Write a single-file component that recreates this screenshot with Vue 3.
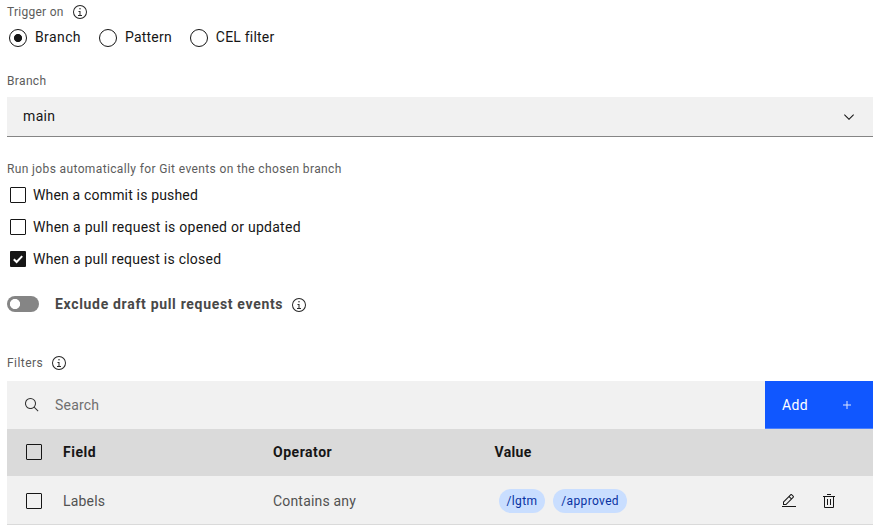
<script setup>
import { h, ref } from 'vue'

const paths = {
  info: 'M17 22V14H13V16H15V22H12V24H20V22ZM16 8a1.5 1.5 0 1 0 1.5 1.5A1.5 1.5 0 0 0 16 8ZM16 30A14 14 0 1 1 30 16 14 14 0 0 1 16 30ZM16 4A12 12 0 1 0 28 16 12 12 0 0 0 16 4Z',
  search: 'M29 27.586l-7.552-7.552a11.018 11.018 0 1 0-1.414 1.414L27.586 29ZM4 13a9 9 0 1 1 9 9A9.01 9.01 0 0 1 4 13Z',
  chevron: 'M16 22L6 12 7.4 10.6 16 19.2 24.6 10.6 26 12Z',
  add: 'M17 15V8H15V15H8V17H15V24H17V17H24V15Z',
  edit: 'M2 26H30V28H2ZM25.4 9c.8-.8.8-2 0-2.8l-3.6-3.6c-.8-.8-2-.8-2.8 0l-15 15V24h6.4L25.4 9ZM20.4 4L24 7.6l-3 3L17.4 7 20.4 4ZM6 22v-3.6l10-10 3.6 3.6-10 10H6Z',
  trash: 'M12 12H14V24H12ZM18 12H20V24H18ZM4 6V8H6V28a2 2 0 0 0 2 2H24a2 2 0 0 0 2-2V8h2V6ZM8 28V8H24V28ZM12 2H20V4H12Z'
}
const Icon = ({ name }) =>
  h('svg', { viewBox: '0 0 32 32', width: 16, height: 16, fill: 'currentColor', 'aria-hidden': 'true' }, [
    h('path', { d: paths[name], 'fill-rule': 'evenodd' })
  ])
Icon.props = ['name']

const trigger = ref('Branch')
const triggers = [
  { label: 'Branch', cls: 't-branch' },
  { label: 'Pattern', cls: 't-pattern' },
  { label: 'CEL filter', cls: 't-cel' }
]
const events = ref([
  { label: 'When a commit is pushed', on: false, cls: 'e-push' },
  { label: 'When a pull request is opened or updated', on: false, cls: 'e-open' },
  { label: 'When a pull request is closed', on: true, cls: 'e-close' }
])
</script>

<template>
  <main class="form">
    <div class="label trigger-label"><span class="l-trigger">Trigger on</span><Icon name="info" class="info" /></div>
    <div class="radios">
      <div v-for="t in triggers" :key="t.label" class="radio" :class="t.cls" @click="trigger = t.label">
        <i class="dot" :class="{ on: trigger === t.label }"></i><span>{{ t.label }}</span>
      </div>
    </div>

    <div class="label branch-label"><span class="l-branch">Branch</span></div>
    <div class="select"><span>main</span><Icon name="chevron" /></div>

    <div class="label events-label"><span class="l-events">Run jobs automatically for Git events on the chosen branch</span></div>
    <div class="events">
      <div v-for="e in events" :key="e.label" class="event" :class="e.cls" @click="e.on = !e.on">
        <i class="box" :class="{ on: e.on }">
          <svg v-if="e.on" viewBox="0 0 16 16" width="16" height="16"><path d="M3.8 8.2L6.6 11L12.2 5.1" fill="none" stroke="#fff" stroke-width="2" /></svg>
        </i>
        <span>{{ e.label }}</span>
      </div>
    </div>

    <div class="toggle-row">
      <i class="toggle"></i><strong>Exclude draft pull request events</strong><Icon name="info" class="info" />
    </div>

    <div class="label filters-label"><span class="l-filters">Filters</span><Icon name="info" class="info" /></div>
    <section class="table">
      <div class="toolbar">
        <div class="search"><Icon name="search" /><span>Search</span></div>
        <div class="add"><span>Add</span><Icon name="add" /></div>
      </div>
      <div class="tr head">
        <i class="box"></i><span class="h-field">Field</span><span class="h-op">Operator</span><span class="h-value">Value</span>
      </div>
      <div class="tr row">
        <i class="box"></i><span class="c-labels">Labels</span><span class="c-any">Contains any</span>
        <div class="tags"><span class="tag lgtm">/lgtm</span><span class="tag approved">/approved</span></div>
        <div class="actions"><Icon name="edit" /><Icon name="trash" /></div>
      </div>
    </section>
  </main>
</template>

<style>
body { background: #fff; }
</style>

<style scoped>
.form {
  box-sizing: border-box;
  width: 880px;
  height: 532px;
  padding: 2px 7px 0;
  font: 14px/20px Roboto, "Liberation Sans", sans-serif;
  letter-spacing: 0.35px;
  color: #161616;
  white-space: nowrap;
  overflow: hidden;
}
svg { display: block; flex: none; }
.label {
  display: flex;
  align-items: center;
  height: 20px;
  font-size: 12px;
  line-height: 16px;
  color: #5c5c5c;
}
.info { color: #262626; margin-left: 8px; }
.l-trigger { letter-spacing: 0.26px; }
.l-events { letter-spacing: 0.37px; }
.radios { display: flex; align-items: center; height: 20px; margin-top: 5px; padding-left: 2px; gap: 18px; }
.radio { display: flex; align-items: center; gap: 8px; }
.t-branch { letter-spacing: 0.4px; }
.t-pattern { letter-spacing: 0.2px; }
.t-cel { letter-spacing: 0.2px; }
.dot {
  box-sizing: border-box;
  flex: none;
  width: 18px;
  height: 18px;
  margin-top: 2px;
  border: 1px solid #161616;
  border-radius: 50%;
}
.dot.on { background: radial-gradient(circle, #161616 3.7px, transparent 4.4px); }
.branch-label { margin-top: 24px; }
.select {
  box-sizing: border-box;
  display: flex;
  align-items: center;
  justify-content: space-between;
  height: 40px;
  margin-top: 6px;
  padding: 0 16px;
  background: #f1f1f1;
  border-bottom: 1px solid #858585;
}
.select span { padding-bottom: 2px; }
.events-label { margin-top: 22px; }
.event { display: flex; align-items: center; height: 32px; padding-left: 3px; gap: 7px; }
.e-push { letter-spacing: 0.17px; }
.e-open { letter-spacing: 0.265px; }
.e-close { letter-spacing: 0.235px; }
.box {
  box-sizing: border-box;
  display: block;
  flex: none;
  width: 16px;
  height: 16px;
  border: 1px solid #161616;
  border-radius: 1px;
}
.box.on { border: 0; background: #161616; }
.toggle-row { display: flex; align-items: center; height: 20px; margin-top: 19px; color: #484848; letter-spacing: 0.68px; }
.toggle {
  flex: none;
  width: 32px;
  height: 16px;
  margin-right: 16px;
  border-radius: 8px;
  background: radial-gradient(circle at 8px 8px, #fff 4.7px, transparent 5.4px), #858585;
}
.toggle-row .info { margin-top: 2px; }
.filters-label { margin-top: 39px; letter-spacing: 0.45px; }
.table { margin-top: 8px; border-bottom: 1px solid #dadada; background: #f1f1f1; }
.toolbar { display: flex; height: 48px; }
.search { flex: 1; display: flex; align-items: center; gap: 15.5px; padding-left: 16.5px; color: #6f6f6f; letter-spacing: 0.2px; }
.search svg { color: #333; }
.add {
  box-sizing: border-box;
  display: flex;
  align-items: center;
  justify-content: space-between;
  width: 108px;
  padding: 1px 18px 0 17px;
  background: #1057ff;
  border-bottom: 1px solid #4a7fff;
  color: #fff;
}
.add svg { opacity: 0.85; }
.tr {
  display: grid;
  grid-template-columns: 37px 210px 221.5px 1fr auto;
  align-items: center;
  padding-left: 19px;
}
.head { height: 47px; padding-bottom: 1px; box-sizing: border-box; background: #dadada; font-weight: 700; letter-spacing: 0.52px; }
.h-value { letter-spacing: 0.35px; }
.row { height: 48px; color: #525252; }
.c-labels { letter-spacing: 0.2px; }
.c-any { letter-spacing: 0.18px; }
.row > * { margin-top: 2px; }
.tags { display: flex; gap: 8px; padding-left: 4px; }
.tag {
  box-sizing: border-box;
  height: 24px;
  padding: 0 8px;
  border-radius: 12px;
  background: #c9deff;
  color: #0832a2;
  font-size: 12px;
  line-height: 24px;
}
.actions { display: flex; gap: 24px; padding-right: 36px; color: #161616; }
</style>
